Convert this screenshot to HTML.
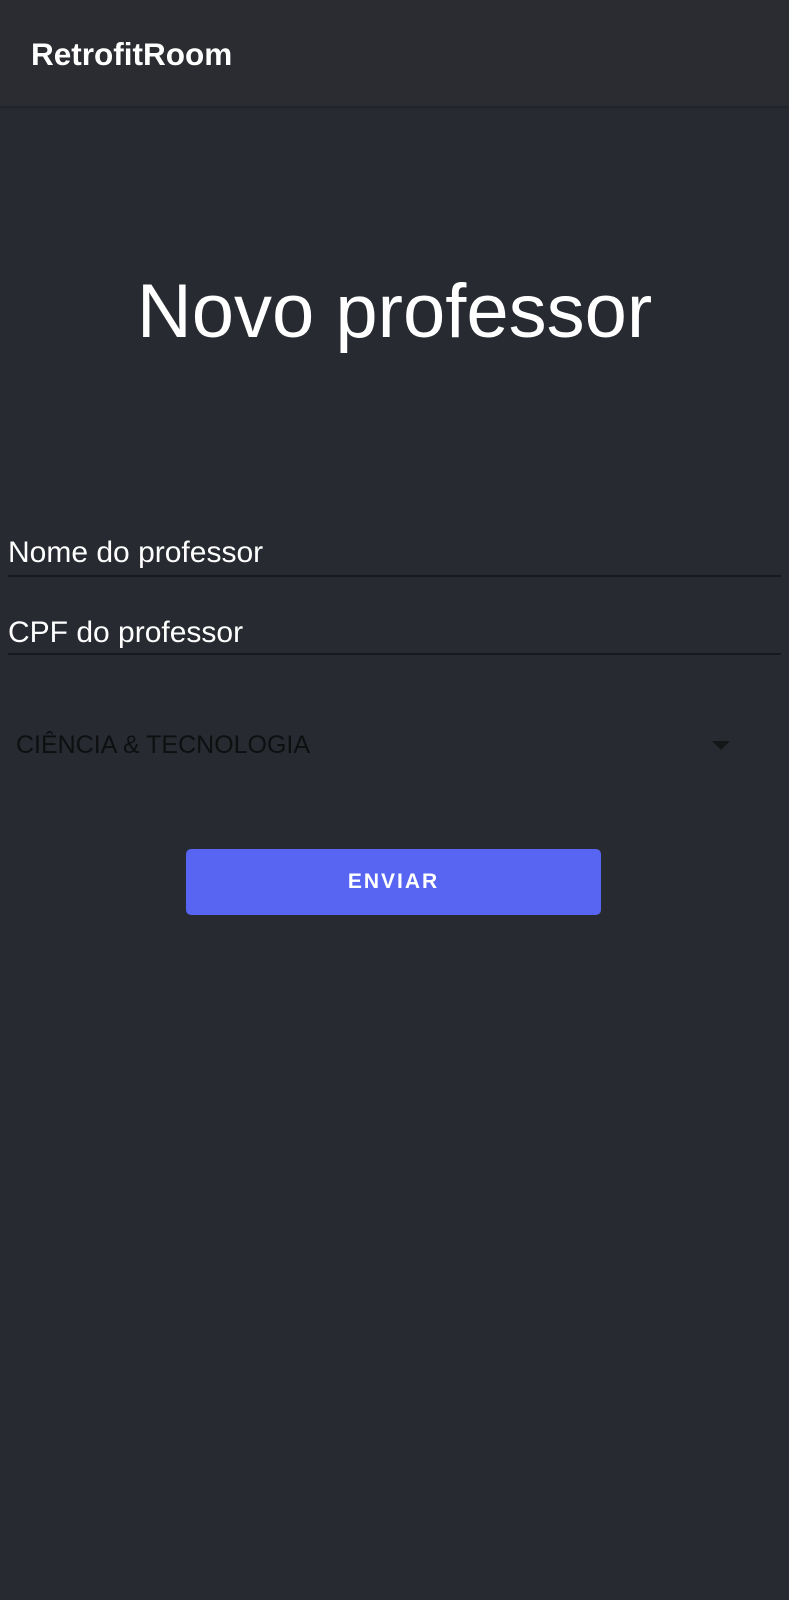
<!DOCTYPE html>
<html><head><meta charset="utf-8"><style>
html,body{margin:0;padding:0}
body{width:789px;height:1600px;background:#272a30;font-family:"Liberation Sans",sans-serif;position:relative;overflow:hidden}
.hdr{position:absolute;left:0;top:0;width:789px;height:106px;background:#2a2c31;box-shadow:0 1px 3px rgba(0,0,0,.25)}
.hdr span{position:absolute;left:31px;top:36px;font-size:31.5px;font-weight:bold;color:#fff;line-height:36px}
.title{position:absolute;left:0;width:789px;top:267px;text-align:center;color:#fff;font-size:76px;line-height:90px}
.lbl{position:absolute;left:8px;color:#fff;font-size:30px;line-height:34px}
.line{position:absolute;left:8px;width:773px;height:2px;background:#17191c}
.sp{position:absolute;left:16px;top:730px;font-size:25px;line-height:30px;color:#0e0f11}
.tri{position:absolute;left:712px;top:741px;width:0;height:0;border-left:9px solid transparent;border-right:9px solid transparent;border-top:9px solid #151618}
.btn{position:absolute;left:186px;top:849px;width:415px;height:66px;background:#5865f2;border-radius:5px;color:#fff;font-size:21px;font-weight:bold;letter-spacing:2px;text-align:center;line-height:66px}
</style></head><body>
<div class="hdr"><span>RetrofitRoom</span></div>
<div class="title">Novo professor</div>
<div class="lbl" style="top:536px">Nome do professor</div>
<div class="line" style="top:575px"></div>
<div class="lbl" style="top:616px">CPF do professor</div>
<div class="line" style="top:653px"></div>
<div class="sp">CIÊNCIA &amp; TECNOLOGIA</div>
<div class="tri"></div>
<div class="btn">ENVIAR</div>
</body></html>
